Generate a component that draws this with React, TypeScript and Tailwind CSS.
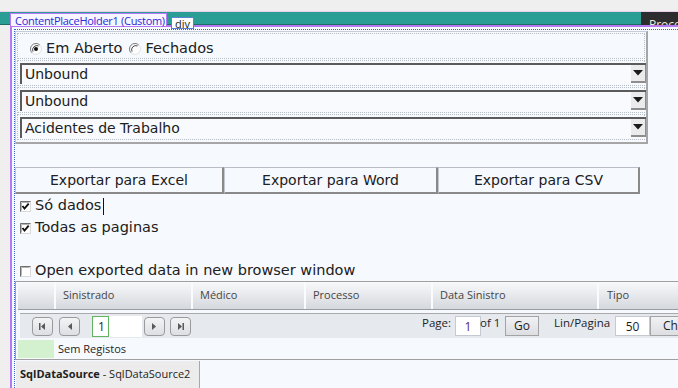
import React from 'react'

function Radio({ checked }: { checked?: boolean }) {
  return (
    <svg width="12" height="12" viewBox="0 0 12 12" className="shrink-0">
      <circle cx="6" cy="6" r="5.5" fill="#fdfdfd" />
      <path d="M2.1 9.9 A5.5 5.5 0 0 1 9.9 2.1" fill="none" stroke="#7c7c7c" strokeWidth="1" />
      <path d="M9.9 2.1 A5.5 5.5 0 0 1 2.1 9.9" fill="none" stroke="#e2e2e2" strokeWidth="1" />
      <path d="M3 8.6 A4.2 4.2 0 0 1 8.6 3" fill="none" stroke="#4a4a4a" strokeWidth="1" />
      {checked ? <circle cx="6" cy="6" r="2" fill="#111" /> : null}
    </svg>
  )
}

function Check({ checked }: { checked?: boolean }) {
  return (
    <svg width="11" height="11" viewBox="0 0 11 11" className="shrink-0">
      <rect x="0.5" y="0.5" width="10" height="10" fill="#fff" stroke="#dadada" />
      <path d="M0.5 10.5 V0.5 H10.5" fill="none" stroke="#6e6e6e" />
      <path d="M1.5 9.5 V1.5 H9.5" fill="none" stroke="#b4b4b4" />
      {checked ? <path d="M2.5 5 L4.5 7.6 L8.7 2.6" fill="none" stroke="#111" strokeWidth="1.9" /> : null}
    </svg>
  )
}

function Dropdown({ label }: { label: string }) {
  return (
    <div className="ml-[2px] -mr-[2px] flex h-[21px] flex-1 border-l-2 border-t-2 border-[#5b5b5b] bg-[#f8fafd]">
      <div className="flex-1 pl-[3px] text-[14px] leading-[19px] text-[#202020]">{label}</div>
      <div className="flex h-[18px] w-[15px] items-center justify-center border-b-2 border-r border-[#8e8e8e] bg-[#ebebed]">
        <svg width="10" height="6" viewBox="0 0 10 6">
          <path d="M0 0 H10 L5 5.5 Z" fill="#1a1a1a" />
        </svg>
      </div>
    </div>
  )
}

function NavBtn({ dir, end }: { dir: 'l' | 'r'; end?: boolean }) {
  return (
    <div className="flex h-[19px] w-[21px] items-center justify-center rounded-[4px] border border-[#9a9a9a] bg-gradient-to-b from-[#f3f4f6] to-[#dcdfe3]">
      <svg width="9" height="9" viewBox="0 0 9 9">
        {dir === 'l' ? (
          <>
            {end ? <rect x="1" y="1" width="1.5" height="7" fill="#5a5a5a" /> : null}
            <path d="M3 4.5 L7 1 V8 Z" fill="#5a5a5a" />
          </>
        ) : (
          <>
            <path d="M2 1 L6 4.5 L2 8 Z" fill="#5a5a5a" />
            {end ? <rect x="6.5" y="1" width="1.5" height="7" fill="#5a5a5a" /> : null}
          </>
        )}
      </svg>
    </div>
  )
}

const columns = [
  { label: '', w: 'w-[38px]' },
  { label: 'Sinistrado', w: 'w-[137px]' },
  { label: 'Médico', w: 'w-[113px]' },
  { label: 'Processo', w: 'w-[127px]' },
  { label: 'Data Sinistro', w: 'w-[166px]' },
]

export default function App() {
  return (
    <div className="relative flex h-[388px] w-[678px] flex-col overflow-hidden bg-[#f6f9fe] font-['Open_Sans',sans-serif]">
      {/* IDE chrome */}
      <div className="h-[11px] shrink-0 bg-[#efefef]" />
      <div className="h-px shrink-0 bg-[#e9cfe9]" />
      <div className="flex h-[13px] shrink-0">
        <div className="flex-1 border-b border-[#1d6d66] bg-[#2a9d94]" />
        <div className="w-[37px] overflow-hidden whitespace-nowrap bg-[#2d2d30] pl-[8px] pt-[6px] text-[12px] leading-[14px] text-[#f3ecd9]">
          Proce
        </div>
      </div>

      <div className="flex min-h-0 flex-1">
        <div className="w-[10px] shrink-0 bg-[#efefef]" />
        <div className="flex-1 border-l-2 border-t-2 border-[#b57af3] pl-[2px] pt-[2px]">
          <div className="relative flex h-full flex-col border-l border-t border-dotted border-[#3a5fd0] font-['DejaVu_Sans',sans-serif] text-[#202020]">
            <div className="absolute right-0 top-0 h-[6px] w-[30px] bg-[#2d2d30]" />

            {/* filter panel */}
            <div className="mt-px flex h-[113px] w-[633px] shrink-0 flex-col gap-px border-l border-t border-[#c6cdd8] border-b-2 border-r-2 border-b-[#a6a6a6] border-r-[#a6a6a6] px-px pt-px">
              <div className="flex h-[26px] items-center border border-dotted border-[#b9bec7] pl-[12px] pt-[5px] text-[14.5px]">
                <Radio checked />
                <span className="ml-[4px]">Em Aberto</span>
                <span className="ml-[7px] flex">
                  <Radio />
                </span>
                <span className="ml-[4px]">Fechados</span>
              </div>
              {['Unbound', 'Unbound', 'Acidentes de Trabalho'].map((label, i) => (
                <div key={i} className="flex h-[26px] border border-dotted border-[#b9bec7] pt-[2px]">
                  <Dropdown label={label} />
                </div>
              ))}
            </div>

            {/* export buttons */}
            <div className="mt-[23px] flex h-[27px] shrink-0 text-[14px]">
              {[
                { label: 'Exportar para Excel', w: 'w-[209px]' },
                { label: 'Exportar para Word', w: 'w-[214px]' },
                { label: 'Exportar para CSV', w: 'w-[202px]' },
              ].map((b) => (
                <div
                  key={b.label}
                  className={`${b.w} flex items-center justify-center border-l border-t border-b-2 border-r-2 border-l-[#c3c7cf] border-t-[#b8bdc6] border-b-[#8a8a8a] border-r-[#8a8a8a]`}
                >
                  {b.label}
                </div>
              ))}
            </div>

            {/* options */}
            <div className="flex h-[22px] shrink-0 items-center pl-[5px] pt-[2px] text-[14.5px]">
              <Check checked />
              <span className="ml-[4px]">Só dados</span>
              <span className="ml-[2px] h-[17px] w-px bg-[#111]" />
            </div>
            <div className="flex h-[22px] shrink-0 items-center pl-[5px] pt-[2px] text-[14.5px]">
              <Check checked />
              <span className="ml-[4px]">Todas as paginas</span>
            </div>
            <div className="mt-[21px] flex h-[22px] shrink-0 items-center pl-[5px] pt-[2px] text-[14.5px]">
              <Check />
              <span className="ml-[4px]">Open exported data in new browser window</span>
            </div>

            {/* grid */}
            <div className="flex shrink-0 flex-col border-b border-l border-t border-[#a0a0a0] pl-[2px] font-['Open_Sans',sans-serif] text-[11px]">
              <div className="flex h-[28px] border-b border-[#9c9c9c] bg-gradient-to-b from-[#f8f9fb] to-[#d5d8dd] text-[#454545]">
                {columns.map((c, i) => (
                  <div key={i} className={`${c.w} flex shrink-0 items-center border-r-2 border-[#fafbfc] pl-[7px]`}>
                    {c.label}
                  </div>
                ))}
                <div className="flex flex-1 items-center pl-[8px]">Tipo</div>
              </div>

              <div className="ml-[2px] mt-[3px] flex h-[25px] items-start whitespace-nowrap border-t border-[#a9a9a9] bg-[#e6e9ee] pl-[12px] text-[11.5px] text-[#1e1e1e]">
                <div className="mt-[2px] flex shrink-0 items-center">
                  <NavBtn dir="l" end />
                  <div className="ml-[6px]">
                    <NavBtn dir="l" />
                  </div>
                  <div className="ml-[12px] flex h-[21px] w-[50px] bg-white">
                    <div className="flex w-[17px] items-center border border-[#62b45f] pl-[5px] text-[12px]">1</div>
                  </div>
                  <div className="ml-[2px]">
                    <NavBtn dir="r" />
                  </div>
                  <div className="ml-[5px]">
                    <NavBtn dir="r" end />
                  </div>
                </div>
                <span className="ml-[231px] mt-[2px] w-[28px] shrink-0 leading-[14px]">Page:</span>
                <div className="ml-[5px] mt-[2px] flex h-[20px] w-[26px] shrink-0 items-end justify-center border border-[#c5cad2] bg-white pb-[1px] text-[12px] leading-[14px] text-[#5b2a6e]">
                  1
                </div>
                <span className="-ml-[1px] mt-[2px] w-[19px] shrink-0 leading-[14px]">of 1</span>
                <div className="ml-[6px] mt-[2px] flex h-[20px] w-[34px] shrink-0 items-center justify-center border border-[#a3a3a3] bg-gradient-to-b from-[#f1f2f4] to-[#dcdee2] text-[12px]">
                  Go
                </div>
                <span className="ml-[15px] mt-[2px] w-[58px] shrink-0 leading-[14px]">Lin/Pagina</span>
                <div className="ml-[3px] mt-[2px] flex h-[20px] w-[35px] shrink-0 items-end justify-center border border-[#c5cad2] bg-white pb-[1px] text-[12px] leading-[14px]">
                  50
                </div>
                <div className="mt-[2px] flex h-[20px] w-[60px] shrink-0 items-center border border-[#a3a3a3] bg-gradient-to-b from-[#f1f2f4] to-[#dcdee2] pl-[12px] text-[12px]">
                  Change
                </div>
              </div>

              <div className="flex h-[21px] items-start text-[#1e1e1e]">
                <div className="mt-[2px] h-[18px] w-[36px] bg-[#d3f1cf]" />
                <span className="ml-[4px] mt-[2px] leading-[17px]">Sem Registos</span>
              </div>
            </div>

            <div className="mt-px flex h-[27px] w-[185px] shrink-0 items-center border-l border-r border-l-[#fbfbfb] border-r-[#a8a8a8] bg-[#ececec] pl-[4px] font-['Open_Sans',sans-serif] text-[11px] text-[#1e1e1e]">
              <span className="font-bold">SqlDataSource</span>
              <span>&nbsp;- SqlDataSource2</span>
            </div>
          </div>
        </div>
      </div>

      {/* designer tags */}
      <div className="absolute left-[10px] top-[13px] flex h-[14px] w-[157px] items-center border border-[#b57af3] bg-[#f7f5ff] pl-[4px] text-[11px] leading-none tracking-[-0.3px] text-[#2a2ad8]">
        ContentPlaceHolder1 (Custom)
      </div>
      <div className="absolute left-[171px] top-[17px] flex h-[12px] w-[23px] items-center justify-center border border-[#5a83d6] bg-white text-[11px] leading-none text-[#222]">
        div
      </div>
    </div>
  )
}
